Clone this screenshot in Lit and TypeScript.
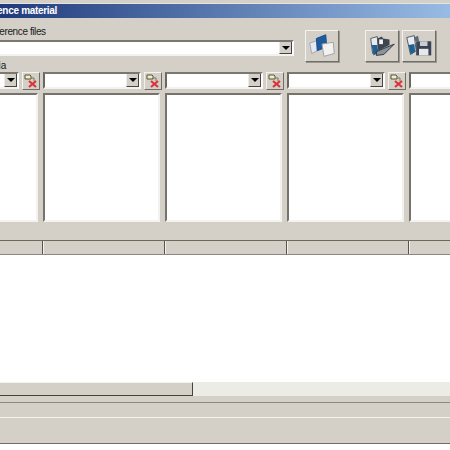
import { LitElement, html, css, svg } from "lit";
import { customElement } from "lit/decorators.js";

const removeIcon = svg`<svg class="ico" width="18" height="18" viewBox="0 0 18 18">
  <path d="M3 3h5l1 1v3H3z" fill="#f3eec0" stroke="#55523f"/>
  <path d="M9 6h3v3" fill="none" stroke="#6f7a60"/>
  <path d="M7 9l7 6M14 9l-7 6" stroke="#d8343a" stroke-width="2.2"/>
</svg>`;

const copyIcon = svg`<svg width="34" height="30" viewBox="0 0 34 30">
  <path d="M4 12l8-3v11l-6 3z" fill="#e4e9ef" stroke="#9aa6b4"/>
  <path d="M11 7l10-4 1 13-10 4z" fill="#1f5c9e" stroke="#1a4f88"/>
  <path d="M17 13l12-2 1 12-11 3z" fill="#f3f1ee" stroke="#98a0aa"/>
</svg>`;

const openIcon = svg`<svg width="34" height="30" viewBox="0 0 34 30">
  <path d="M5 7l7-2 1 13-6 5z" fill="#e8ecf0" stroke="#4b5562"/>
  <path d="M6 14l6 0 1 8-5 3z" fill="#1f5f92"/>
  <path d="M12 7l5-2 1 2 7 1 0 6-12 6z" fill="#3d4650"/>
  <path d="M11 21l19-8-11 11-8 1z" fill="#8b929b" stroke="#2c333b"/>
  <path d="M14 8h4v5h-4z" fill="#f4f4f4"/>
</svg>`;

const saveIcon = svg`<svg width="34" height="30" viewBox="0 0 34 30">
  <path d="M4 6l8-2 2 16-6 4z" fill="#e8ecf0" stroke="#4b5562"/>
  <path d="M6 14l6-1 1 8-5 3z" fill="#1f5f92"/>
  <rect x="14" y="10" width="16" height="15" fill="#3b4350"/>
  <rect x="18" y="10" width="8" height="5" fill="#c9ced6"/>
  <rect x="17" y="18" width="10" height="7" fill="#e6e8ec"/>
  <path d="M12 6l4-2 1 6h-4z" fill="#5f6975"/>
</svg>`;

@customElement("app-root")
export class AppRoot extends LitElement {
  static styles = css`
    :host { display: block; width: 450px; height: 450px; overflow: hidden; background: #d4d0c8; }
    .win { width: 580px; height: 450px; margin-left: -79px; display: flex; flex-direction: column;
      font: 10px "Liberation Sans", Arial, sans-serif; color: #1a1a1a; background: #d4d0c8; }
    .top { height: 4px; background: #d4d0c8; flex: none; box-sizing: border-box; border-bottom: 1px solid #e6e4de; }
    .title { height: 14px; flex: none; box-sizing: border-box; padding-left: 52px; line-height: 14px; color: #fff; font-weight: 700; font-size: 10px; letter-spacing: -0.3px;
      background: linear-gradient(90deg, #0a246a 0%, #a6caf0 100%); }
    .files { height: 37px; flex: none; display: flex; margin-top: 7px; }
    .left { width: 366px; margin-left: 7px; flex: none; }
    .label { height: 13px; line-height: 13px; padding-left: 57px; letter-spacing: -0.4px; }
    .combo { height: 16px; box-sizing: border-box; display: flex; justify-content: flex-end; background: #fff;
      border: 2px solid; border-color: #7a7870 #fff #f4f2ee #6a685f; }
    .left .combo { margin-top: 2px; }
    .arrow { width: 13px; flex: none; background: #d4d0c8; display: flex; align-items: center; justify-content: center;
      border-left: 1px solid #efece6; border-right: 1px solid #444; border-bottom: 1px solid #444; box-sizing: border-box; }
    .arrow::after { content: ""; border: 4px solid transparent; border-top: 4px solid #000; border-bottom: 0; }
    .tool { width: 34px; height: 32px; flex: none; box-sizing: border-box; display: flex; align-items: center; justify-content: center;
      background: #d4d0c8; border: 1px solid; border-color: #f4f2ee #6f6d66 #6f6d66 #f4f2ee; box-shadow: 1px 1px 0 #9a978f; margin-top: 5px; }
    .t1 { margin-left: 11px; }
    .t2 { margin-left: 26px; }
    .t3 { margin-left: 3px; }
    .label2 { height: 13px; line-height: 13px; padding-left: 53px; flex: none; margin-top: -3px; }
    .heads { display: flex; height: 18px; flex: none; }
    .head { width: 122px; flex: none; display: flex; box-sizing: border-box; padding-right: 4px; }
    .head .combo { width: 98px; height: 17px; margin-right: 3px; flex: none; }
    .del { width: 18px; height: 18px; flex: none; box-sizing: border-box; background: #d4d0c8;
      border: 1px solid; border-color: #f4f2ee #6f6d66 #6f6d66 #f4f2ee; }
    .ico { display: block; margin: -1px; }
    .lists { display: flex; height: 129px; flex: none; margin-top: 3px; }
    .list { width: 117px; margin-right: 5px; flex: none; box-sizing: border-box; background: #fff;
      border: 2px solid; border-color: #75736b #f4f2ee #f4f2ee #75736b; }
    .bar { height: 18px; flex: none; }
    .cols { display: flex; height: 15px; flex: none; box-sizing: border-box; border-top: 1px solid #6a685f; border-bottom: 1px solid #8a887f; }
    .col { width: 122px; flex: none; box-sizing: border-box; border-right: 1px solid #55534c; background: #d4d0c8; box-shadow: inset 1px 0 0 #f4f2ee; }
    .rows { height: 127px; flex: none; background: #fff; }
    .scroll { height: 14px; flex: none; background: #ecebe6; }
    .thumb { width: 272px; height: 14px; box-sizing: border-box; background: #d4d0c8;
      border: 1px solid; border-color: #f4f2ee #45433d #45433d #f4f2ee; }
    .strip { height: 7px; flex: none; border-bottom: 1px solid #8a887f; box-sizing: border-box; }
    .strip2 { height: 15px; flex: none; border-bottom: 1px solid #f4f2ee; box-sizing: border-box; }
    .strip3 { height: 26px; flex: none; border-bottom: 1px solid #6f6d66; box-sizing: border-box; }
    .end { flex: 1; background: #fff; }
  `;

  render() {
    const n = [0, 1, 2, 3, 4];
    return html`<div class="win">
      <div class="top"></div>
      <div class="title">Reference material</div>
      <div class="files">
        <div class="left">
          <div class="label">Reference files</div>
          <div class="combo"><div class="arrow"></div></div>
        </div>
        <div class="tool t1">${copyIcon}</div>
        <div class="tool t2">${openIcon}</div>
        <div class="tool t3">${saveIcon}</div>
      </div>
      <div class="label2">Criteria</div>
      <div class="heads">
        ${n.map(() => html`<div class="head"><div class="combo"><div class="arrow"></div></div><div class="del">${removeIcon}</div></div>`)}
      </div>
      <div class="lists">${n.map(() => html`<div class="list"></div>`)}</div>
      <div class="bar"></div>
      <div class="cols">${n.map(() => html`<div class="col"></div>`)}</div>
      <div class="rows"></div>
      <div class="scroll"><div class="thumb"></div></div>
      <div class="strip"></div>
      <div class="strip2"></div>
      <div class="strip3"></div>
      <div class="end"></div>
    </div>`;
  }
}
